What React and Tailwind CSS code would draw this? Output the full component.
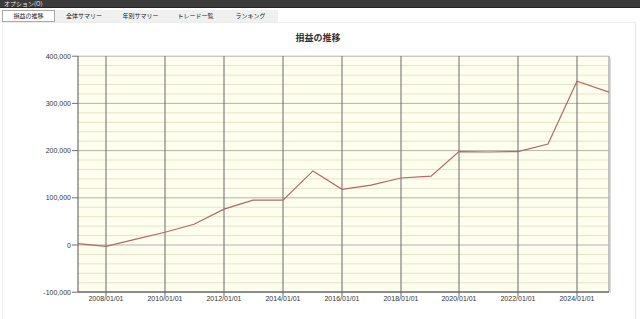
import React from "react";

const plot = { l: 78, r: 609, t: 56, b: 292 };
const yOf = (v) => 245 - (v / 100000) * 47.2;

const pts = [
  [78, 3000], [106, -3000], [135, 12000], [165, 27000], [194, 44000], [224, 76000],
  [253, 95000], [283, 95000], [313, 157000], [342, 118000], [371, 127000], [401, 142000],
  [431, 146000], [459, 198000], [489, 197000], [518, 198000], [548, 214000], [577, 347000],
  [609, 324000],
];

const xTicks = [
  [106, "2008/01/01"], [165, "2010/01/01"], [224, "2012/01/01"], [283, "2014/01/01"],
  [342, "2016/01/01"], [401, "2018/01/01"], [459, "2020/01/01"], [518, "2022/01/01"],
  [577, "2024/01/01"],
];

const yTicks = [
  [400000, "400,000"], [300000, "300,000"], [200000, "200,000"], [100000, "100,000"],
  [0, "0"], [-100000, "-100,000"],
];

function Chart() {
  const minor = [];
  for (let v = -100000; v <= 400000; v += 20000) {
    if (v % 100000 !== 0) minor.push(v);
  }
  return (
    <svg width="640" height="275" viewBox="0 44 640 275" className="block">
      <rect x={plot.l} y={plot.t} width={plot.r - plot.l} height={plot.b - plot.t} fill="#fefeee" />
      {minor.map((v) => (
        <line key={v} x1={plot.l} x2={plot.r} y1={yOf(v)} y2={yOf(v)} stroke="#e4e4cc" strokeWidth="1" />
      ))}
      {yTicks.map(([v]) => (
        <line key={v} x1={plot.l} x2={plot.r} y1={yOf(v)} y2={yOf(v)} stroke="#b4b4a4" strokeWidth="1" />
      ))}
      {xTicks.map(([x]) => (
        <line key={x} x1={x} x2={x} y1={plot.t} y2={plot.b + 4} stroke="#6a6a6a" strokeWidth="1" />
      ))}
      <line x1={plot.r} x2={plot.r} y1={plot.t} y2={plot.b} stroke="#b0b0b0" strokeWidth="1.5" />
      <line x1={plot.r + 1.5} x2={plot.r + 1.5} y1={plot.t + 2} y2={plot.b + 1} stroke="#dcdcdc" strokeWidth="1" />
      <line x1={plot.l} x2={plot.l} y1={plot.t} y2={plot.b} stroke="#707070" strokeWidth="1.2" />
      <line x1={plot.l} x2={plot.r} y1={plot.b} y2={plot.b} stroke="#707070" strokeWidth="1.5" />
      {yTicks.map(([v, t]) => (
        <g key={t}>
          <line x1={72} x2={plot.l} y1={yOf(v)} y2={yOf(v)} stroke="#707070" strokeWidth="1" />
          <text x={71} y={yOf(v) + 2.5} textAnchor="end" fontSize="7" fill="#333" fontFamily="Liberation Sans, Arial, sans-serif">{t}</text>
        </g>
      ))}
      {xTicks.map(([x, t]) => (
        <text key={t} x={x} y={301} textAnchor="middle" fontSize="7" fill="#333" fontFamily="Liberation Sans, Arial, sans-serif">{t}</text>
      ))}
      <polyline
        points={pts.map(([x, v]) => `${x},${yOf(v)}`).join(" ")}
        fill="none"
        stroke="#b06868"
        strokeWidth="1.2"
      />
    </svg>
  );
}

const tabs = [
  ["損益の推移", "w-[53px]"],
  ["全体サマリー", "w-[58px]"],
  ["年別サマリー", "w-[55px]"],
  ["トレード一覧", "w-[55px]"],
  ["ランキング", "w-[55px]"],
];

export default function App() {
  return (
    <div
      className="w-[640px] h-[319px] bg-white overflow-hidden flex flex-col text-[#222]"
      style={{ fontFamily: '"Noto Sans CJK JP", "Liberation Sans", sans-serif' }}
    >
      <div className="h-[8px] bg-[#3b3b3b] border-b border-[#262626] flex items-center pl-[4px]">
        <span className="text-[6px] leading-none text-[#e8e8e8]">オプション(O)</span>
      </div>
      <div className="h-[14px] flex items-center pl-[2px] pt-[2px]">
        <div className="flex h-[12px] bg-[#f0f0f0]">
          {tabs.map(([t, w], i) => (
            <div
              key={t}
              className={`${w} flex items-center justify-center text-[6px] leading-none ${
                i === 0 ? "bg-white border border-[#a8a8a8]" : ""
              }`}
            >
              {t}
            </div>
          ))}
        </div>
      </div>
      <div className="flex-1 border-t border-[#ececec] border-r border-r-[#e4e4e4] mr-[4px] ml-[2px] border-l border-l-[#f0f0f0] flex flex-col">
        <div className="h-[21px] pt-[9px] flex justify-center">
          <span className="text-[9px] leading-[12px] font-bold text-[#333] ml-[-2px]">損益の推移</span>
        </div>
        <div className="ml-[-3px]">
          <Chart />
        </div>
      </div>
    </div>
  );
}
